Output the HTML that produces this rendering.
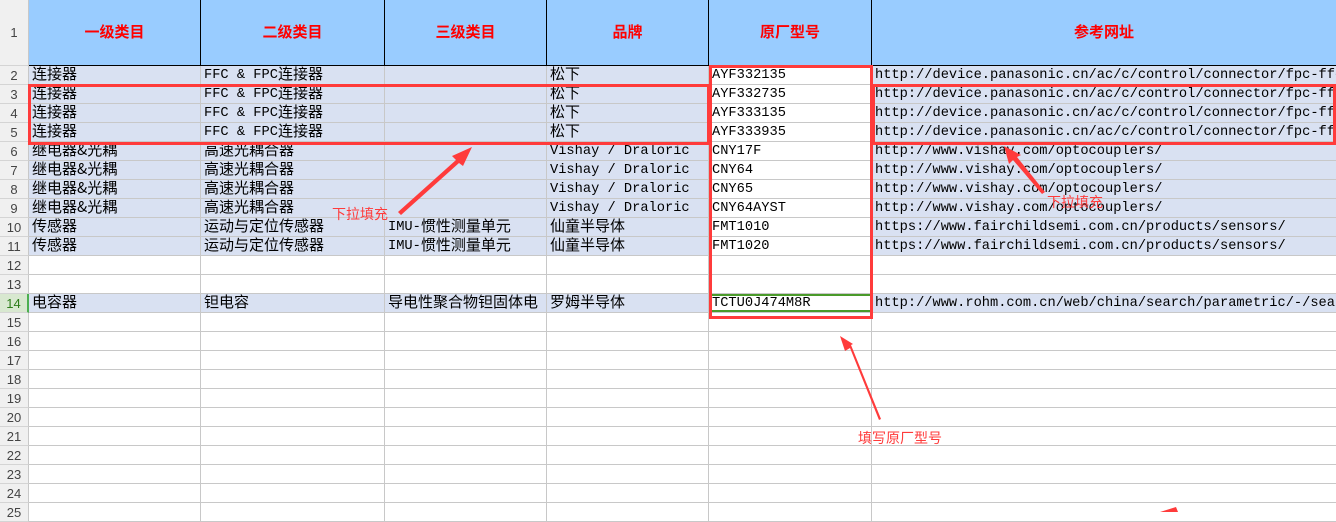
<!DOCTYPE html>
<html><head><meta charset="utf-8"><style>
*{margin:0;padding:0;box-sizing:border-box}
body{width:1336px;height:512px;overflow:hidden;background:#fff;position:relative;font-family:"Liberation Mono","Noto Sans CJK SC",monospace;font-size:13.7px;color:#000}
.k{font-family:"Noto Sans CJK SC",sans-serif;font-size:15px;line-height:1;vertical-align:-1px}
.hdr{position:absolute;top:0;height:66px;background:#99ccff;border-right:1px solid #000;border-bottom:1px solid #000;color:#ff0000;font-weight:bold;font-family:"Liberation Sans","Noto Sans CJK SC",sans-serif;font-size:15px;text-align:center;line-height:66px}
.rn{position:absolute;left:0;width:29px;background:#f0f0f0;border-right:1px solid #c8c8c8;border-bottom:1px solid #d4d4d4;color:#444;font-family:"Liberation Sans",sans-serif;font-size:13px;text-align:center}
.row{position:absolute;left:29px;width:1307px;height:19px;border-bottom:1px solid #c8c8c8}
.row.b{background:#d9e1f2}
.c{position:absolute;top:0;height:18px;line-height:19px;padding-left:3px;white-space:nowrap;overflow:hidden;border-right:1px solid #c8c8c8}
.A{left:0;width:172px}.B{left:172px;width:184px}.C{left:356px;width:162px}.D{left:518px;width:162px}.E{left:680px;width:163px;background:#fff}.F{left:843px;width:464px;border-right:none}
.box{position:absolute;border:3px solid #ff3b3b}
.lbl{position:absolute;color:#ff3b3b;font-family:"Liberation Sans","Noto Sans CJK SC",sans-serif;font-size:14px}
</style></head><body>
<div class="rn" style="top:0;height:66px;line-height:66px">1</div>
<div class="hdr" style="left:29px;width:172px">一级类目</div>
<div class="hdr" style="left:201px;width:184px">二级类目</div>
<div class="hdr" style="left:385px;width:162px">三级类目</div>
<div class="hdr" style="left:547px;width:162px">品牌</div>
<div class="hdr" style="left:709px;width:163px">原厂型号</div>
<div class="hdr" style="left:872px;width:464px;border-right:none">参考网址</div>

<div class="rn" style="top:66px;height:19px;line-height:19px">2</div>
<div class="row b" style="top:66px"><div class="c A"><span class="k">连接器</span></div><div class="c B">FFC &amp; FPC<span class="k">连接器</span></div><div class="c C"></div><div class="c D"><span class="k">松下</span></div><div class="c E">AYF332135</div><div class="c F">http://device.panasonic.cn/ac/c/control/connector/fpc-ffc/</div></div>
<div class="rn" style="top:85px;height:19px;line-height:19px">3</div>
<div class="row b" style="top:85px"><div class="c A"><span class="k">连接器</span></div><div class="c B">FFC &amp; FPC<span class="k">连接器</span></div><div class="c C"></div><div class="c D"><span class="k">松下</span></div><div class="c E">AYF332735</div><div class="c F">http://device.panasonic.cn/ac/c/control/connector/fpc-ffc/</div></div>
<div class="rn" style="top:104px;height:19px;line-height:19px">4</div>
<div class="row b" style="top:104px"><div class="c A"><span class="k">连接器</span></div><div class="c B">FFC &amp; FPC<span class="k">连接器</span></div><div class="c C"></div><div class="c D"><span class="k">松下</span></div><div class="c E">AYF333135</div><div class="c F">http://device.panasonic.cn/ac/c/control/connector/fpc-ffc/</div></div>
<div class="rn" style="top:123px;height:19px;line-height:19px">5</div>
<div class="row b" style="top:123px"><div class="c A"><span class="k">连接器</span></div><div class="c B">FFC &amp; FPC<span class="k">连接器</span></div><div class="c C"></div><div class="c D"><span class="k">松下</span></div><div class="c E">AYF333935</div><div class="c F">http://device.panasonic.cn/ac/c/control/connector/fpc-ffc/</div></div>
<div class="rn" style="top:142px;height:19px;line-height:19px">6</div>
<div class="row b" style="top:142px"><div class="c A"><span class="k">继电器&amp;光耦</span></div><div class="c B"><span class="k">高速光耦合器</span></div><div class="c C"></div><div class="c D">Vishay / Draloric</div><div class="c E">CNY17F</div><div class="c F">http://www.vishay.com/optocouplers/</div></div>
<div class="rn" style="top:161px;height:19px;line-height:19px">7</div>
<div class="row b" style="top:161px"><div class="c A"><span class="k">继电器&amp;光耦</span></div><div class="c B"><span class="k">高速光耦合器</span></div><div class="c C"></div><div class="c D">Vishay / Draloric</div><div class="c E">CNY64</div><div class="c F">http://www.vishay.com/optocouplers/</div></div>
<div class="rn" style="top:180px;height:19px;line-height:19px">8</div>
<div class="row b" style="top:180px"><div class="c A"><span class="k">继电器&amp;光耦</span></div><div class="c B"><span class="k">高速光耦合器</span></div><div class="c C"></div><div class="c D">Vishay / Draloric</div><div class="c E">CNY65</div><div class="c F">http://www.vishay.com/optocouplers/</div></div>
<div class="rn" style="top:199px;height:19px;line-height:19px">9</div>
<div class="row b" style="top:199px"><div class="c A"><span class="k">继电器&amp;光耦</span></div><div class="c B"><span class="k">高速光耦合器</span></div><div class="c C"></div><div class="c D">Vishay / Draloric</div><div class="c E">CNY64AYST</div><div class="c F">http://www.vishay.com/optocouplers/</div></div>
<div class="rn" style="top:218px;height:19px;line-height:19px">10</div>
<div class="row b" style="top:218px"><div class="c A"><span class="k">传感器</span></div><div class="c B"><span class="k">运动与定位传感器</span></div><div class="c C">IMU-<span class="k">惯性测量单元</span></div><div class="c D"><span class="k">仙童半导体</span></div><div class="c E">FMT1010</div><div class="c F">https://www.fairchildsemi.com.cn/products/sensors/</div></div>
<div class="rn" style="top:237px;height:19px;line-height:19px">11</div>
<div class="row b" style="top:237px"><div class="c A"><span class="k">传感器</span></div><div class="c B"><span class="k">运动与定位传感器</span></div><div class="c C">IMU-<span class="k">惯性测量单元</span></div><div class="c D"><span class="k">仙童半导体</span></div><div class="c E">FMT1020</div><div class="c F">https://www.fairchildsemi.com.cn/products/sensors/</div></div>
<div class="rn" style="top:256px;height:19px;line-height:19px">12</div>
<div class="row" style="top:256px"><div class="c A"></div><div class="c B"></div><div class="c C"></div><div class="c D"></div><div class="c E"></div></div>
<div class="rn" style="top:275px;height:19px;line-height:19px">13</div>
<div class="row" style="top:275px"><div class="c A"></div><div class="c B"></div><div class="c C"></div><div class="c D"></div><div class="c E"></div></div>
<div class="rn" style="top:294px;height:19px;line-height:19px;background:#d8e8d0;color:#2e7d1a;border-right:2px solid #4caf50">14</div>
<div class="row b" style="top:294px"><div class="c A"><span class="k">电容器</span></div><div class="c B"><span class="k">钽电容</span></div><div class="c C" style="overflow:visible"><span class="k">导电性聚合物钽固体电</span></div><div class="c D"><span class="k">罗姆半导体</span></div><div class="c E" style="border:2px solid #4a9a2a;line-height:15px;padding-left:1px">TCTU0J474M8R</div><div class="c F">http://www.rohm.com.cn/web/china/search/parametric/-/search</div></div>

<div class="rn" style="top:313px;height:19px;line-height:19px">15</div><div class="row" style="top:313px"><div class="c A"></div><div class="c B"></div><div class="c C"></div><div class="c D"></div><div class="c E"></div></div>
<div class="rn" style="top:332px;height:19px;line-height:19px">16</div><div class="row" style="top:332px"><div class="c A"></div><div class="c B"></div><div class="c C"></div><div class="c D"></div><div class="c E"></div></div>
<div class="rn" style="top:351px;height:19px;line-height:19px">17</div><div class="row" style="top:351px"><div class="c A"></div><div class="c B"></div><div class="c C"></div><div class="c D"></div><div class="c E"></div></div>
<div class="rn" style="top:370px;height:19px;line-height:19px">18</div><div class="row" style="top:370px"><div class="c A"></div><div class="c B"></div><div class="c C"></div><div class="c D"></div><div class="c E"></div></div>
<div class="rn" style="top:389px;height:19px;line-height:19px">19</div><div class="row" style="top:389px"><div class="c A"></div><div class="c B"></div><div class="c C"></div><div class="c D"></div><div class="c E"></div></div>
<div class="rn" style="top:408px;height:19px;line-height:19px">20</div><div class="row" style="top:408px"><div class="c A"></div><div class="c B"></div><div class="c C"></div><div class="c D"></div><div class="c E"></div></div>
<div class="rn" style="top:427px;height:19px;line-height:19px">21</div><div class="row" style="top:427px"><div class="c A"></div><div class="c B"></div><div class="c C"></div><div class="c D"></div><div class="c E"></div></div>
<div class="rn" style="top:446px;height:19px;line-height:19px">22</div><div class="row" style="top:446px"><div class="c A"></div><div class="c B"></div><div class="c C"></div><div class="c D"></div><div class="c E"></div></div>
<div class="rn" style="top:465px;height:19px;line-height:19px">23</div><div class="row" style="top:465px"><div class="c A"></div><div class="c B"></div><div class="c C"></div><div class="c D"></div><div class="c E"></div></div>
<div class="rn" style="top:484px;height:19px;line-height:19px">24</div><div class="row" style="top:484px"><div class="c A"></div><div class="c B"></div><div class="c C"></div><div class="c D"></div><div class="c E"></div></div>
<div class="rn" style="top:503px;height:19px;line-height:19px">25</div><div class="row" style="top:503px"><div class="c A"></div><div class="c B"></div><div class="c C"></div><div class="c D"></div><div class="c E"></div></div>

<div class="box" style="left:28px;top:84px;width:682px;height:61px"></div>
<div class="box" style="left:709px;top:65px;width:164px;height:254px"></div>
<div class="box" style="left:872px;top:84px;width:464px;height:61px;border-right-width:3px"></div>

<svg style="position:absolute;left:0;top:0" width="1336" height="512">
<g fill="#ff3b3b">
<polygon points="398,212 456,160 452,156 472,147 463,166 459,163 401,215"/>
<polygon points="1042,194 1013,160 1009,164 1004,146 1021,155 1017,157 1045,192"/>
<polygon points="879,420 850,348 845,351 840,336 853,344 851,345 881,419"/>
<polygon points="1160,512 1176,507 1178,512"/>
</g>
</svg>
<div class="lbl" style="left:332px;top:204px">下拉填充</div>
<div class="lbl" style="left:1047px;top:192px">下拉填充</div>
<div class="lbl" style="left:858px;top:428px">填写原厂型号</div>
</body></html>
